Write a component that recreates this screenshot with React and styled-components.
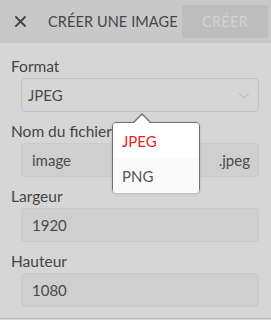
import React from "react";
import styled, { createGlobalStyle } from "styled-components";

const Global = createGlobalStyle`
  html, body { margin: 0; padding: 0; }
  body { background: #d6d6d6; font-family: "Lato", "Noto Sans", sans-serif; }
`;

const Panel = styled.div`
  position: relative;
  width: 271px;
  height: 319px;
  box-sizing: border-box;
  background: #d6d6d6;
  border-bottom: 1px solid #bcbcbc;
  overflow: hidden;
`;

const Header = styled.div`
  display: flex;
  align-items: center;
  height: 43px;
  background: #c8c8c8;
  padding: 0 3px 0 14px;
  box-sizing: border-box;
`;

const CloseButton = styled.button`
  display: flex;
  align-items: center;
  justify-content: center;
  width: 12px;
  height: 12px;
  padding: 0;
  border: 0;
  background: none;
  margin-right: 22px;
`;

const Title = styled.div`
  flex: 1;
  font-size: 14.5px;
  color: #464646;
  letter-spacing: 0.1px;
  white-space: nowrap;
`;

const CreateButton = styled.button`
  width: 86px;
  height: 33px;
  border: 0;
  border-radius: 4px;
  background: #bdbdbd;
  color: #d2d2d2;
  font-family: inherit;
  font-size: 14.5px;
  letter-spacing: 0.3px;
`;

const Body = styled.div`
  padding: 13px 12px 0 11px;
`;

const Field = styled.div`
  display: flex;
  flex-direction: column;
  margin-bottom: 9px;
`;

const Label = styled.div`
  font-size: 15.5px;
  line-height: 20px;
  color: #454545;
  margin-bottom: 2px;
`;

const Control = styled.div`
  display: flex;
  align-items: center;
  justify-content: space-between;
  margin-left: 10px;
  height: ${(p) => p.h || 34}px;
  box-sizing: border-box;
  border-radius: 4px;
  border: 1px solid ${(p) => (p.select ? "#c3c3c3" : "#cacaca")};
  background: ${(p) => (p.select ? "#d6d6d6" : "#cfcfcf")};
  padding: 0 ${(p) => (p.select ? 8 : 8)}px 0 ${(p) => (p.select ? 6 : 10)}px;
  font-size: 15px;
  color: #4a4a4a;
`;

const Suffix = styled.span`
  color: #4a4a4a;
`;

const Popup = styled.div`
  position: absolute;
  left: 112px;
  top: 122px;
  width: 88px;
  height: 71px;
  box-sizing: border-box;
  background: #fafafa;
  border: 1px solid #707070;
  border-radius: 4px;
  box-shadow: 0 1px 3px rgba(0, 0, 0, 0.15);

  &::before {
    content: "";
    position: absolute;
    left: 19px;
    top: -10px;
    width: 0;
    height: 0;
    border-left: 10px solid transparent;
    border-right: 10px solid transparent;
    border-bottom: 10px solid #707070;
  }
  &::after {
    content: "";
    position: absolute;
    left: 20px;
    top: -8px;
    width: 0;
    height: 0;
    border-left: 9px solid transparent;
    border-right: 9px solid transparent;
    border-bottom: 9px solid #ffffff;
  }
`;

const Option = styled.div`
  height: 35px;
  display: flex;
  align-items: center;
  padding-left: 9px;
  font-size: 15px;
  color: ${(p) => (p.active ? "#ee1c1c" : "#555555")};
  background: ${(p) => (p.active ? "#ffffff" : "#fafafa")};
  border-radius: ${(p) => (p.active ? "3px 3px 0 0" : "0 0 3px 3px")};
`;

export default function App() {
  return (
    <>
      <Global />
      <Panel>
        <Header>
          <CloseButton aria-label="Fermer">
            <svg width="11" height="11" viewBox="0 0 11 11">
              <path d="M1 1L10 10M10 1L1 10" stroke="#444" strokeWidth="1.8" strokeLinecap="round" />
            </svg>
          </CloseButton>
          <Title>CRÉER UNE IMAGE</Title>
          <CreateButton>CRÉER</CreateButton>
        </Header>
        <Body>
          <Field>
            <Label>Format</Label>
            <Control select h={34}>
              <span>JPEG</span>
              <svg width="12" height="7" viewBox="0 0 12 7">
                <path d="M1 1L6 6L11 1" stroke="#c2c2c2" strokeWidth="1.4" fill="none" />
              </svg>
            </Control>
          </Field>
          <Field>
            <Label>Nom du fichier</Label>
            <Control>
              <span>image</span>
              <Suffix>.jpeg</Suffix>
            </Control>
          </Field>
          <Field>
            <Label>Largeur</Label>
            <Control>
              <span>1920</span>
            </Control>
          </Field>
          <Field>
            <Label>Hauteur</Label>
            <Control>
              <span>1080</span>
            </Control>
          </Field>
        </Body>
        <Popup>
          <Option active>JPEG</Option>
          <Option>PNG</Option>
        </Popup>
      </Panel>
    </>
  );
}
